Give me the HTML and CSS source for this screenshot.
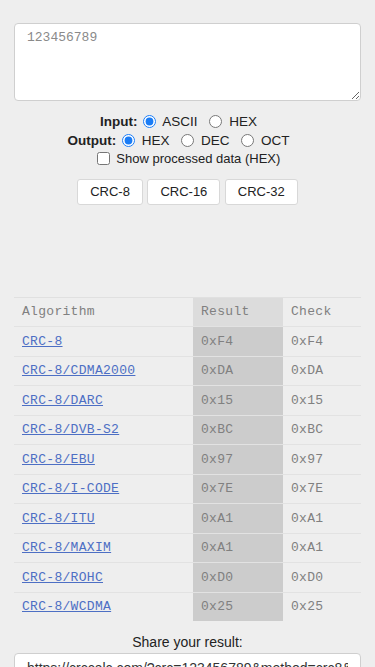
FILE: index.html
```html
<!DOCTYPE html>
<html lang="en">
<head>
    <meta charset="UTF-8">
    <meta name="viewport" content="width=device-width, initial-scale=1.0">
    <title>CRC Calculator</title>
    <link rel="stylesheet" href="styles.css">
</head>
<body>
    <div class="container">
        <textarea id="data" class="data-input">123456789</textarea>

        <div class="options">
            <div class="option-row">
                <span class="option-label">Input:</span>
                <label><input type="radio" name="input" checked> ASCII</label>
                <label><input type="radio" name="input"> HEX</label>
            </div>
            <div class="option-row">
                <span class="option-label">Output:</span>
                <label><input type="radio" name="output" checked> HEX</label>
                <label><input type="radio" name="output"> DEC</label>
                <label><input type="radio" name="output"> OCT</label>
            </div>
            <div class="option-row check-row">
                <label><input type="checkbox"> Show processed data (HEX)</label>
            </div>
        </div>

        <div class="button-container">
            <button type="button">CRC-8</button>
            <button type="button">CRC-16</button>
            <button type="button">CRC-32</button>
        </div>

        <table class="results">
            <thead>
                <tr>
                    <th>Algorithm</th>
                    <th class="result">Result</th>
                    <th>Check</th>
                </tr>
            </thead>
            <tbody>
                <tr><td><a href="#">CRC-8</a></td><td class="result">0xF4</td><td>0xF4</td></tr>
                <tr><td><a href="#">CRC-8/CDMA2000</a></td><td class="result">0xDA</td><td>0xDA</td></tr>
                <tr><td><a href="#">CRC-8/DARC</a></td><td class="result">0x15</td><td>0x15</td></tr>
                <tr><td><a href="#">CRC-8/DVB-S2</a></td><td class="result">0xBC</td><td>0xBC</td></tr>
                <tr><td><a href="#">CRC-8/EBU</a></td><td class="result">0x97</td><td>0x97</td></tr>
                <tr><td><a href="#">CRC-8/I-CODE</a></td><td class="result">0x7E</td><td>0x7E</td></tr>
                <tr><td><a href="#">CRC-8/ITU</a></td><td class="result">0xA1</td><td>0xA1</td></tr>
                <tr><td><a href="#">CRC-8/MAXIM</a></td><td class="result">0xA1</td><td>0xA1</td></tr>
                <tr><td><a href="#">CRC-8/ROHC</a></td><td class="result">0xD0</td><td>0xD0</td></tr>
                <tr><td><a href="#">CRC-8/WCDMA</a></td><td class="result">0x25</td><td>0x25</td></tr>
            </tbody>
        </table>

        <div class="share">
            <div class="share-title">Share your result:</div>
            <input type="text" class="share-link" value="https://crccalc.com/?crc=123456789&amp;method=crc8&amp;datatype=ascii&amp;outtype=hex" readonly>
        </div>
    </div>
</body>
</html>
```

FILE: styles.css
```css
body {
    margin: 0;
    background-color: #eeeeee;
    font-family: "Liberation Sans", Arial, sans-serif;
    color: #222;
}
.container {
    padding: 23px 14px 0 14px;
}
.data-input {
    display: block;
    width: 100%;
    height: 78px;
    box-sizing: border-box;
    padding: 6px 12px;
    border: 1px solid #cfcfcf;
    border-radius: 4px;
    background-color: #fff;
    font-family: "Liberation Mono", "Courier New", monospace;
    font-size: 13px;
    color: #8a8a8a;
    resize: vertical;
}
.options {
    margin-top: 12px;
    text-align: center;
    font-size: 13.5px;
}
.option-row {
    height: 18.5px;
    line-height: 18.5px;
    padding-right: 18px; /* rows sit a little left of centre */
}
.option-row.check-row {
    padding-right: 0;
    font-size: 13px;
}
.option-row label {
    margin-right: 6px;
}
.option-row label:last-child {
    margin-right: 0;
}
.option-label {
    font-weight: bold;
}
.option-row input {
    margin: 0 3px 0 2px;
    vertical-align: -2px;
    accent-color: #1a7cf5;
}
.button-container {
    margin-top: 10px;
    text-align: center;
}
button {
    height: 26px;
    padding: 0 12px;
    margin: 0;
    border: 1px solid #d8d8d8;
    border-radius: 3px;
    background-color: #fff;
    font-family: "Liberation Sans", Arial, sans-serif;
    font-size: 13px;
    color: #222;
}
.results {
    width: 100%;
    margin-top: 92px;
    border-collapse: collapse;
    border-top: 1px solid #e0e0e0;
    font-family: "Liberation Mono", "Courier New", monospace;
    font-size: 13px;
    color: #808080;
}
.results th,
.results td {
    height: 28.5px;
    padding: 0 8px;
    text-align: left;
    font-weight: normal;
    border-bottom: 1px solid #e2e2e2;
    letter-spacing: 0.3px;
}
.results th:first-child {
    width: 163px;
}
.results th.result {
    width: 74px;
    background-color: #dcdcdc;
}
.results td.result {
    background-color: #cccccc;
}
.results tbody tr:last-child td {
    border-bottom: none;
}
.results a {
    color: #4d6fc4;
}
.share {
    margin-top: 13px;
    text-align: center;
}
.share-title {
    font-size: 14px;
    margin-bottom: 3px;
}
.share-link {
    display: block;
    width: 100%;
    box-sizing: border-box;
    padding: 6px 12px;
    border: 1px solid #cfcfcf;
    border-radius: 4px;
    background-color: #fff;
    font-family: "Liberation Sans", Arial, sans-serif;
    font-size: 14px;
    color: #333;
}
```
